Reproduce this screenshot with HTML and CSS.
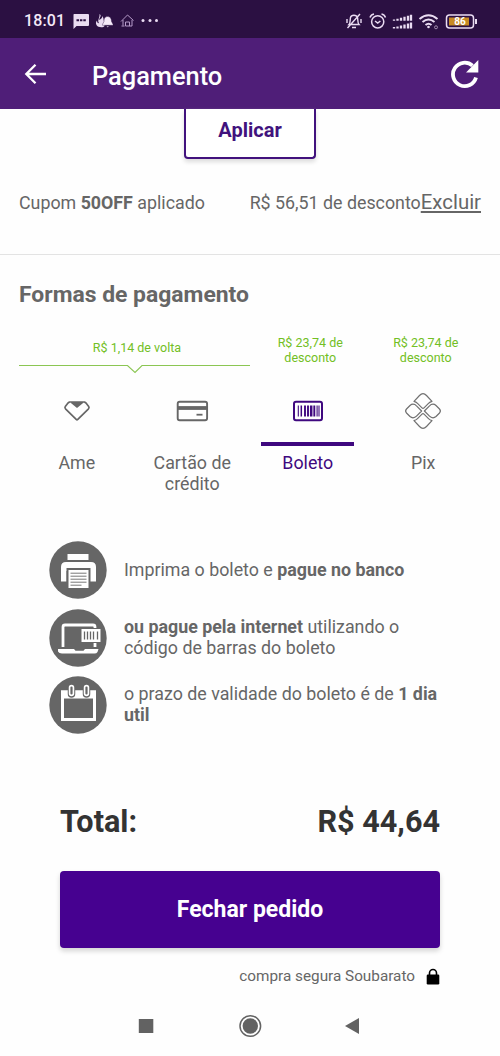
FILE: index.html
```html
<!DOCTYPE html>
<html lang="pt-BR">
<head>
<meta charset="utf-8">
<title>Pagamento</title>
<link rel="stylesheet" href="styles.css">
</head>
<body>
<div class="status">
  <span class="clock">18:01</span>
  <svg class="status-left" width="88" height="18" viewBox="72 12 88 18">
    <path d="M74 14h14q1 0 1 1v10q0 1-1 1H76.500l-3 3V15q0-1 .5-1z" fill="#eadcf2"/>
    <path d="M76.500 20.300h2.500M79.900 20.300h2.500M83.300 20.300h2.500" stroke="#2b1042" stroke-width="2"/>
    <path d="M99.500 14c3 2-1 4 0 6 1-1 3-2 3-4 1.500 3 1.500 6 2 10-1 2-7 1.500-8-1-1-2-.5-3 .5-4.500 0 2 1 3 2 2.500-2-3 1-5 .5-9z" fill="#eadcf2"/>
    <path d="M107.500 16.500c3 0 4 2.500 4 5l1.500 2.800v1h-10.500v-1l1.500-2.800c0-2.500.5-5 3.500-5zm-1 9.500h2.500l-1.200 1.500z" fill="#f5eaf9" stroke="#2b1042" stroke-width=".4"/>
    <path d="M121 21.500l6.500-6.500 6 5.500M123 20v5.500M132 20v6h-6.500v-4h4v4M121.500 26h3" stroke="#b69bc9" fill="none"/>
    <g fill="#eadcf2"><circle cx="143" cy="20.500" r="1.500"/><circle cx="150" cy="20.500" r="1.500"/><circle cx="156.500" cy="20.500" r="1.500"/></g>
  </svg>
  <svg class="status-right" width="134" height="20" viewBox="345 10 134 20" fill="none" stroke="#eadcf2">
    <path d="M349 23.500c1.500-1.500 1-5 1.500-7 .8-3 6-3 7 0 .5 2 0 5.500 1.500 7zM352 26.500h4M347 18v4M361 18v4M347.500 27L360 13" stroke-width="1.400"/>
    <circle cx="377.700" cy="20.800" r="6.100" stroke-width="1.500"/><path d="M370 16.500q1-3 4-3.500M385.500 16.500q-1-3-4-3.500M375 20l2.700 2 2.700-2" stroke-width="1.500"/>
    <path d="M394 19.800v-1.300M397.500 19.800v-2M401 19.800v-3M404.500 19.800v-4M408 19.800v-5M411 19.800v-6M394 27.500v-1.500M397.500 27.500v-2M401 27.500v-3M404.500 27.500v-4M408 27.500v-5M411 27.500v-6" stroke-width="2.300"/>
    <path d="M419.500 18q9-7.500 18 0M422.500 21q6-5 12 0M425.500 24q3-2.500 6 0" stroke-width="2"/><circle cx="428.500" cy="26" r="1.300" fill="#eadcf2" stroke="none"/><circle cx="436" cy="26.300" r="1.500" stroke="#a38caf"/>
    <rect x="446.500" y="14" width="27" height="13" rx="3" stroke-width="1.500"/><rect x="449" y="16.500" width="20" height="8" fill="#c78a22" stroke="none"/><path d="M476 18v5" stroke-width="2"/>
    <text class="battery" x="460" y="24.200" text-anchor="middle">86</text>
  </svg>
</div>
<header class="header">
  <svg class="back" width="24" height="24" viewBox="0 0 24 24"><path d="M22 12H3M11.500 2.800L2.300 12l9.200 9.200" fill="none" stroke="#fff" stroke-width="2.300"/></svg>
  <h1 class="title">Pagamento</h1>
  <svg class="reload" width="30" height="30" viewBox="0 0 30 30"><path d="M22.500 6.700A11.700 11.700 0 1 0 26 18.500" fill="none" stroke="#fff" stroke-width="3.800"/><path d="M28.300 1v12.500H16z" fill="#fff"/></svg>
</header>
<section class="coupon">
  <button class="apply">Aplicar</button>
  <div class="coupon-row"><span>Cupom <b>50OFF</b> aplicado</span><span class="off">R$ 56,51 de desconto</span><a class="remove">Excluir</a></div>
</section>
<main class="payment">
  <h2 class="subtitle">Formas de pagamento</h2>
  <div class="benefits">
    <div class="cashback"><span>R$ 1,14 de volta</span>
      <svg width="231" height="10" viewBox="0 0 231 10"><path d="M0 1.500h108.500L116 8.500l7-7h108" fill="none" stroke="#8bc653" stroke-width="1.100"/></svg>
    </div>
    <span class="discount">R$ 23,74 de desconto</span>
    <span class="discount">R$ 23,74 de desconto</span>
  </div>
  <div class="tabs">
    <div class="tab"><div class="tab-icon">
      <svg width="40" height="40" viewBox="0 0 40 40"><path d="M12.500 11h15l1.500 1 2.700 3.500q.8 1.200-.2 2.300L20.800 28.400q-.8.800-1.600 0L8.500 17.800q-1-1.100-.2-2.300L11 12z" fill="none" stroke="#666" stroke-width="1.700" stroke-linejoin="round"/><path d="M14 11h12.500l-1 1.500L20 17l-5.500-4.500z" fill="#666"/></svg></div><span>Ame</span></div>
    <div class="tab"><div class="tab-icon">
      <svg width="40" height="40" viewBox="0 0 40 40"><rect x="5.700" y="10.800" width="29.400" height="18.400" rx="2" fill="none" stroke="#666" stroke-width="1.900"/><path d="M5.400 17h30" stroke="#666" stroke-width="3.800"/><path d="M24.500 23.700h6" stroke="#666" stroke-width="1.800"/></svg></div><span>Cartão de crédito</span></div>
    <div class="tab active"><div class="tab-icon">
      <svg width="40" height="40" viewBox="0 0 40 40" stroke="#3f087f" fill="none"><rect x="6" y="10.700" width="28" height="18.500" rx="2" stroke-width="2"/><path d="M10.300 14.500v11M29.100 14.500v11M31 14.500v11" stroke-width="1.100"/><path d="M13.300 14.500v11" stroke-width="1.500"/><path d="M17 14.500v11M20 14.500v11M26.300 14.500v11" stroke-width="1.900"/><path d="M23.200 14.500v11" stroke-width="2.500"/></svg></div><span>Boleto</span></div>
    <div class="tab"><div class="tab-icon">
      <svg width="40" height="40" viewBox="0 0 40 40"><g fill="none" stroke="#707070" stroke-width="1.200" stroke-linejoin="round"><path d="M11 10.300L16.500 4.500Q20 .8 23.500 4.500L29 10.300Q27 10.800 25.500 12.300L21 16.800Q20 17.800 19 16.800L14.500 12.300Q13 10.800 11 10.300z"/><path d="M11 29.700L16.500 35.500Q20 39.200 23.500 35.500L29 29.700Q27 29.200 25.500 27.700L21 23.200Q20 22.200 19 23.200L14.500 27.700Q13 29.200 11 29.700z"/><path d="M18.600 20L13.500 25.200Q12 26.800 10 26.800Q8.500 26.800 7 25.500L3.500 22Q1.700 20 3.500 18L7 14.500Q8.500 13.200 10 13.200Q12 13.200 13.500 14.800z"/><path d="M21.400 20L26.500 25.200Q28 26.800 30 26.800Q31.500 26.800 33 25.500L36.500 22Q38.300 20 36.500 18L33 14.500Q31.500 13.200 30 13.200Q28 13.200 26.500 14.800z"/></g></svg></div><span>Pix</span></div>
  </div>
  <ul class="steps">
    <li class="step"><svg width="58" height="58" viewBox="0 0 58 58"><circle cx="29" cy="29" r="28.700" fill="#666"/><path d="M18.500 13h21v6h-21z" fill="#fff"/><path d="M17 21h25q5 0 5 5v14.500h-6V30H17.500v10.500h-5.500V26q0-5 5-5z" fill="#fff"/><path d="M17.500 27h24v14h-24z" fill="#666"/><path d="M19.500 29h20v18h-20z" fill="#fff"/><path d="M21.500 32.200h16M21.500 35.200h16M21.500 38.200h16M21.500 41.200h16M21.500 44.200h11" stroke="#777" stroke-width="1"/></svg>
    <p>Imprima o boleto e <b>pague no banco</b></p></li>
    <li class="step"><svg width="58" height="58" viewBox="0 0 58 58"><circle cx="29" cy="29" r="28.700" fill="#666"/><path d="M14 38V18q0-2 2-2h28q2 0 2 2v20" fill="none" stroke="#fff" stroke-width="2.800"/><path d="M9 40h16l1.500 1.700h8L36 40h13.500l-1 3q-1 1.500-3 1.500H13q-3 0-4-2z" fill="#fff"/><path d="M31.500 19h20v15h-20z" fill="#666"/><path d="M32.500 20h19v13h-19z" fill="#fff"/><path d="M35.500 22.500v8M38.500 22.500v8M41.500 22.500v8M44.500 22.500v8M48.500 22.500v8" stroke="#666" stroke-width="1.300"/></svg>
    <p><b>ou pague pela internet</b> utilizando o<br>código de barras do boleto</p></li>
    <li class="step"><svg width="58" height="58" viewBox="0 0 58 58"><circle cx="29" cy="29" r="28.700" fill="#666"/><path d="M13.500 16h32v27.500h-32z" fill="none" stroke="#fff" stroke-width="3"/><path d="M12 14.500h35v8H12z" fill="#fff"/><path d="M22.500 12v6M37.500 12v6" stroke="#666" stroke-width="7.500" stroke-linecap="round"/><path d="M22.500 11.500v6M37.500 11.500v6" stroke="#fff" stroke-width="5.500" stroke-linecap="round"/><path d="M22.500 11.500v6M37.500 11.500v6" stroke="#666" stroke-width="2.200" stroke-linecap="round"/></svg>
    <p>o prazo de validade do boleto é de <b>1 dia<br>util</b></p></li>
  </ul>
</main>
<footer class="checkout">
  <div class="total"><span>Total:</span><span>R$ 44,64</span></div>
  <button class="close-order">Fechar pedido</button>
  <div class="secure"><span>compra segura Soubarato</span><svg width="14" height="18" viewBox="0 0 14 18"><rect x=".7" y="6.500" width="12.600" height="10" rx="1.200"/><path d="M3.500 7V5a3.500 3.500 0 0 1 7 0v2" fill="none" stroke="#000" stroke-width="1.600"/></svg></div>
</footer>
<nav class="nav">
  <svg width="224" height="30" viewBox="138 1011 224 30"><rect x="138.800" y="1019" width="14.500" height="14" fill="#626262"/><circle cx="250.300" cy="1026" r="10.300" fill="none" stroke="#626262" stroke-width="1.500"/><circle cx="250.300" cy="1026" r="7.700" fill="#626262"/><path d="M359 1018v16l-14-8z" fill="#626262"/></svg>
</nav>
</body>
</html>
```
FILE: styles.css
```css
* { box-sizing: border-box; }
body { margin: 0; width: 500px; height: 1056px; overflow: hidden; background: #fefefe; color: #666; font-family: Roboto, sans-serif; font-size: 17.820px; line-height: 21px; }
svg { display: block; flex: none; }
h1, h2, p, ul { margin: 0; padding: 0; }
button { font-family: inherit; font-weight: 700; cursor: pointer; }
.status { height: 38px; background: #2b1042; display: flex; align-items: center; padding: 3px 21px 0 24px; }
.clock { width: 48px; color: #f4e9f8; font-size: 16px; font-weight: 500; letter-spacing: .1px; }
.status-right { margin-left: auto; }
.battery { font-size: 10px; font-weight: 700; fill: #fff; stroke: none; }
.header { height: 71px; background: #4f1e78; display: flex; align-items: center; padding: 0 20px 0 24px; }
.title { margin: 4px 0 0 44px; color: #fff; font-size: 25.400px; line-height: 30px; font-weight: 500; }
.reload { margin-left: auto; }
.coupon { height: 146px; border-bottom: 1px solid #e3e3e3; }
.apply { display: block; width: 132px; height: 50px; margin: 0 auto; padding: 0 0 6px; border: 2px solid #41127d; border-top: 0; border-radius: 0 0 4px 4px; background: #fff; color: #41127d; font-size: 20px; box-shadow: 0 3px 4px #ddd; }
.coupon-row { display: flex; align-items: baseline; padding: 33px 19px 0; white-space: nowrap; }
.off { margin-left: auto; }
.remove { font-size: 20.400px; text-decoration: underline; }
.payment { padding: 27px 19px 0; }
.subtitle { font-size: 22.900px; line-height: 26px; }
.benefits { display: grid; grid-template-columns: 231px 1fr 1fr; margin-top: 26px; height: 39px; color: #72bf24; font-size: 12.500px; line-height: 15px; text-align: center; }
.cashback { padding-top: 6px; display: flex; flex-direction: column; gap: 9px; }
.cashback span { padding-left: 5px; }
.discount { padding: 1px 20px 0 25px; }
.tabs { display: grid; grid-template-columns: repeat(4, 1fr); height: 122px; }
.tab { display: flex; flex-direction: column; align-items: center; text-align: center; }
.tab-icon { width: 93px; height: 73px; padding-top: 18px; margin-bottom: 6px; display: flex; justify-content: center; border-bottom: 4px solid transparent; }
.tab span { max-width: 90px; }
.active { color: #3f087f; }
.active .tab-icon { border-color: #3f087f; }
.steps { list-style: none; margin: 46px 0 0 30px; display: grid; gap: 9.500px; }
.step { display: flex; align-items: center; gap: 17px; height: 58px; white-space: nowrap; }
.step p { padding-bottom: 2px; }
.checkout { padding: 70px 60px 0; }
.total { display: flex; justify-content: space-between; color: #333; font-size: 30.600px; line-height: 36px; font-weight: 700; }
.close-order { display: block; width: 100%; height: 77px; margin-top: 31px; border: 0; border-radius: 4px; background: #460190; color: #fff; font-size: 23px; box-shadow: 0 3px 5px #d4d4d4; }
.secure { display: flex; justify-content: flex-end; align-items: center; gap: 11px; margin-top: 18px; font-size: 15.300px; }
.nav { display: flex; justify-content: center; margin: 24px 0 0; }
```
